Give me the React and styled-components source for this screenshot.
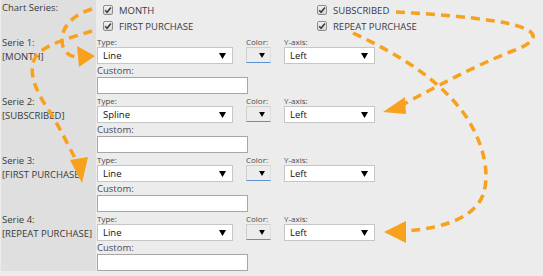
import React from "react";
import styled, { createGlobalStyle } from "styled-components";

const GlobalStyle = createGlobalStyle`
  html, body { margin: 0; padding: 0; background: #ececec; }
  body { font-family: "Open Sans", "Noto Sans", sans-serif; color: #3a3a3a; }
  #root { width: 543px; height: 276px; }
`;

const Page = styled.div`
  position: relative;
  width: 543px;
  height: 276px;
  overflow: hidden;
  background: #ececec;
`;

const Form = styled.div`
  display: grid;
  grid-template-columns: 95px 1fr;
  column-gap: 1px;
  margin-left: 1px;
`;

const SideCell = styled.div`
  background: #dfdfdf;
  font-size: 9.5px;
  line-height: 14px;
  color: #3a3a3a;
  white-space: nowrap;
  overflow: hidden;
  padding-left: 1px;
  padding-top: ${(p) => (p.$top ? "1px" : "0")};
`;

const MainCell = styled.div`
  padding-bottom: ${(p) => (p.$last ? "0" : "1px")};
`;

const CheckGrid = styled.div`
  display: grid;
  grid-template-columns: 214px 214px;
  grid-auto-rows: 16px;
  padding: 2px 0 1px 6px;
`;

const CheckItem = styled.label`
  display: flex;
  align-items: center;
  gap: 6px;
  font-size: 9.5px;
  color: #3a3a4a;
  white-space: nowrap;
`;

const Box = styled.span`
  box-sizing: border-box;
  width: 10px;
  height: 10px;
  border: 1px solid #8c8c8c;
  border-radius: 2px;
  background: linear-gradient(#f2f2f2, #d6d6d6);
  display: flex;
  align-items: center;
  justify-content: center;
`;

const FieldRow = styled.div`
  display: flex;
  align-items: flex-start;
  gap: 13px;
`;

const Field = styled.div`
  display: flex;
  flex-direction: column;
  width: ${(p) => p.$w}px;
`;

const SmallLabel = styled.div`
  font-size: 8px;
  line-height: 11px;
  height: 11px;
  color: #4a4a4a;
  white-space: nowrap;
`;

const Select = styled.div`
  box-sizing: border-box;
  height: 17px;
  background: #fff;
  border: 1px solid #c6c6c6;
  display: flex;
  align-items: center;
  justify-content: space-between;
  padding: 0 6px 0 5px;
  font-size: 9.5px;
  color: #111;
`;

const ColorBox = styled.div`
  box-sizing: border-box;
  height: 16px;
  width: 25px;
  border-top: 1px solid #cfcfcf;
  border-left: 1px solid #cfcfcf;
  border-right: 1px solid #dedede;
  border-bottom: 1px solid #5b92d0;
  display: flex;
  align-items: flex-end;
  justify-content: flex-end;
  padding: 0 5px 4px 0;
`;

const CustomLabel = styled.div`
  font-size: 9.5px;
  line-height: 13px;
  height: 13px;
  color: #4a4a4a;
`;

const TextBox = styled.input`
  box-sizing: border-box;
  display: block;
  width: 151px;
  height: 17px;
  margin: 0;
  padding: 0 3px;
  border: 1px solid #a6a6a6;
  background: #fff;
  outline: none;
`;

const Overlay = styled.svg`
  position: absolute;
  left: 0;
  top: 0;
  pointer-events: none;
`;

const Arrow = ({ size = 7 }) => (
  <svg width={size} height={Math.round(size * 0.8)} viewBox="0 0 7 6">
    <path d="M0 0 L7 0 L3.5 6 Z" fill="#000" />
  </svg>
);

const Check = () => (
  <svg width="8" height="8" viewBox="0 0 8 8">
    <path d="M1.2 4.2 L3.1 6.2 L6.9 1.4" fill="none" stroke="#3d3d3d" strokeWidth="1.6" />
  </svg>
);

const series = [
  { name: "MONTH", type: "Line" },
  { name: "SUBSCRIBED", type: "Spline" },
  { name: "FIRST PURCHASE", type: "Line" },
  { name: "REPEAT PURCHASE", type: "Line" },
];

const checks = ["MONTH", "SUBSCRIBED", "FIRST PURCHASE", "REPEAT PURCHASE"];

const ORANGE = "#f7a11c";

export default function App() {
  return (
    <Page>
      <GlobalStyle />
      <Form>
        <SideCell $top>Chart Series:</SideCell>
        <MainCell>
          <CheckGrid>
            {checks.map((c) => (
              <CheckItem key={c}>
                <Box>
                  <Check />
                </Box>
                {c}
              </CheckItem>
            ))}
          </CheckGrid>
        </MainCell>
        {series.map((s, i) => (
          <React.Fragment key={s.name}>
            <SideCell>
              Serie {i + 1}:
              <br />[{s.name}]
            </SideCell>
            <MainCell $last={i === series.length - 1}>
              <FieldRow>
                <Field $w={136}>
                  <SmallLabel>Type:</SmallLabel>
                  <Select>
                    {s.type}
                    <Arrow />
                  </Select>
                </Field>
                <Field $w={25}>
                  <SmallLabel>Color:</SmallLabel>
                  <ColorBox>
                    <Arrow size={6} />
                  </ColorBox>
                </Field>
                <Field $w={91}>
                  <SmallLabel>Y-axis:</SmallLabel>
                  <Select>
                    Left
                    <Arrow />
                  </Select>
                </Field>
              </FieldRow>
              <CustomLabel>Custom:</CustomLabel>
              <TextBox readOnly value="" />
            </MainCell>
          </React.Fragment>
        ))}
      </Form>
      <Overlay width="543" height="276" viewBox="0 0 543 276">
        <g fill="none" stroke={ORANGE} strokeWidth="3.5" strokeDasharray="9 6">
          <path d="M92 9 C75 14 62 25 62 40 C62 50 67 56 77 57" />
          <path d="M92 31 C70 38 40 45 34 60 C28 75 38 95 50 112 C60 128 68 145 76 160" />
          <path d="M396 12 C450 15 510 20 528 30 C540 37 530 45 510 52 C470 68 430 90 404 104" />
          <path d="M353 33 C400 55 440 80 465 115 C485 145 490 175 483 195 C475 215 450 228 404 231" />
        </g>
        <g fill={ORANGE}>
          <polygon points="77,46 95,56 79,67" />
          <polygon points="70,160 88,157 82,183" />
          <polygon points="383,112 405,97 406,114" />
          <polygon points="384,232 406,221 406,243" />
        </g>
      </Overlay>
    </Page>
  );
}
